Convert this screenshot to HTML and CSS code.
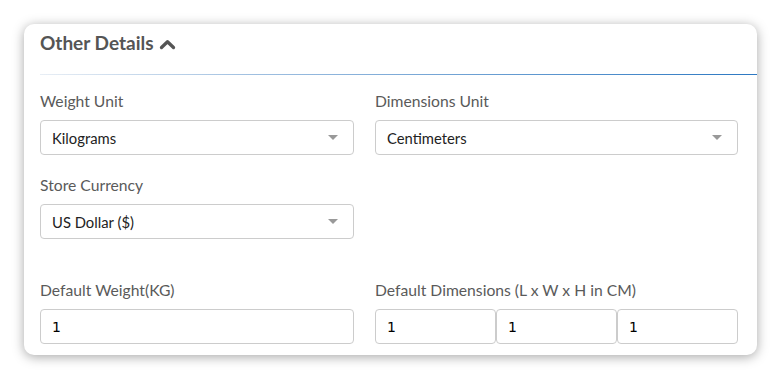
FILE: index.html
```html
<!DOCTYPE html>
<html lang="en">
<head>
    <meta charset="UTF-8">
    <meta name="viewport" content="width=device-width, initial-scale=1.0">
    <title>Other Details</title>
    <link rel="stylesheet" href="styles.css">
</head>
<body>
    <div class="page">
        <div class="panel">
            <div class="panel-head">
                <span class="panel-title">Other Details</span>
                <svg class="chevron" width="17" height="12" viewBox="0 0 17 12">
                    <polyline points="2.5,9.5 8.5,3.8 14.5,9.5" fill="none" stroke="#555" stroke-width="3.3" stroke-linecap="round" stroke-linejoin="round"/>
                </svg>
            </div>
            <div class="divider"></div>
            <div class="panel-body">
                <div class="field">
                    <div class="label">Weight Unit</div>
                    <div class="select">Kilograms<span class="caret"></span></div>
                </div>
                <div class="field">
                    <div class="label">Dimensions Unit</div>
                    <div class="select">Centimeters<span class="caret"></span></div>
                </div>
                <div class="field">
                    <div class="label">Store Currency</div>
                    <div class="select">US Dollar ($)<span class="caret"></span></div>
                </div>
                <div class="field empty"></div>
                <div class="field spaced">
                    <div class="label">Default Weight(KG)</div>
                    <div class="input">1</div>
                </div>
                <div class="field spaced">
                    <div class="label">Default Dimensions (L x W x H in CM)</div>
                    <div class="input-group">
                        <div class="input">1</div>
                        <div class="input">1</div>
                        <div class="input">1</div>
                    </div>
                </div>
            </div>
        </div>
    </div>
</body>
</html>
```

FILE: styles.css
```css
body {
    margin: 0;
    padding: 0;
    background-color: #fff;
    font-family: 'Lato', 'Open Sans', sans-serif;
}

.page {
    padding: 24px 23px 23px 24px;
}

.panel {
    background-color: #fff;
    border-radius: 10px;
    box-shadow: 0px 2px 12px rgba(0, 0, 0, 0.35);
    height: 331px;
    box-sizing: border-box;
}

.panel-head {
    height: 50px;
    box-sizing: border-box;
    padding: 7px 16px 19px 16px;
    display: flex;
    align-items: center;
    gap: 5px;
}

.panel-title {
    font-size: 19px;
    font-weight: bold;
    color: #555;
    line-height: 24px;
}

.chevron {
    display: block;
    margin-top: 1px;
}

.divider {
    margin-left: 16px;
    height: 1px;
    background: linear-gradient(to right, #e8eef5 0%, #9fbfe0 30%, #2c78c2 100%);
}

.panel-body {
    padding: 16px 19px 12px 16px;
    display: grid;
    grid-template-columns: 314px 363px;
    column-gap: 21px;
    row-gap: 20px;
}

.field.spaced {
    margin-top: 21px;
}

.label {
    font-size: 15.7px;
    color: #5a5a5a;
    line-height: 20px;
    margin-bottom: 9px;
}

.select,
.input {
    height: 35px;
    box-sizing: border-box;
    border: 1px solid #ccc;
    border-radius: 4px;
    padding: 0 11px;
    display: flex;
    align-items: center;
    font-size: 14.8px;
    color: #222;
    background-color: #fff;
}

.select {
    justify-content: space-between;
}

.caret {
    width: 0;
    height: 0;
    border-left: 5px solid transparent;
    border-right: 5px solid transparent;
    border-top: 5px solid #999;
    margin-right: 4px;
}

.input {
    font-family: 'DejaVu Sans', sans-serif;
    font-size: 14px;
    color: #000;
}

.input-group {
    display: flex;
}

.input-group .input {
    flex: 1;
}
```
